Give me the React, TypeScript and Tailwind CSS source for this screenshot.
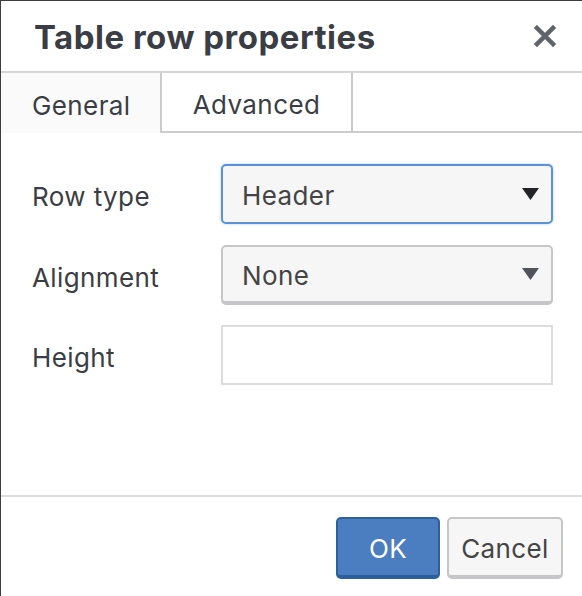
import { useState } from "react";

type Tab = "general" | "advanced";

const font = { fontFamily: "Inter, 'Noto Sans', sans-serif" };

function Caret({ dark }: { dark?: boolean }) {
  return (
    <svg width="17" height="12" viewBox="0 0 17 12" className="shrink-0">
      <path d="M0 0 H17 L8.5 12 Z" fill={dark ? "#222428" : "#4f545a"} />
    </svg>
  );
}

export default function App() {
  const [tab, setTab] = useState<Tab>("general");

  return (
    <div
      className="w-[582px] h-[596px] bg-white border-t border-l border-[#3d3d3d] flex flex-col text-[#3a3e44] overflow-hidden"
      style={font}
    >
      {/* Header */}
      <div className="h-[72px] shrink-0 flex items-center justify-between pl-[33px] pr-[21px] border-b-2 border-[#d5d5d5]">
        <h1 className="text-[33px] font-bold tracking-[0.5px] leading-none pt-[2px]">Table row properties</h1>
        <button className="text-[#5f636a] p-1">
          <svg width="24" height="24" viewBox="0 0 24 24">
            <path d="M4 4 L20 20 M20 4 L4 20" stroke="currentColor" strokeWidth="4.5" strokeLinecap="square" />
          </svg>
        </button>
      </div>

      {/* Tabs */}
      <div className="h-[60px] shrink-0 flex">
        <button
          onClick={() => setTab("general")}
          className={`w-[161px] pl-[31px] pt-[4px] text-left text-[26px] tracking-[0.4px] border-r-2 border-[#cccccc] ${
            tab === "general" ? "bg-[#fafafa] border-b-0" : "border-b-2"
          }`}
        >
          General
        </button>
        <button
          onClick={() => setTab("advanced")}
          className={`w-[191px] pt-[4px] text-center text-[26px] tracking-[0.4px] border-r-2 border-[#cccccc] ${
            tab === "advanced" ? "bg-[#fafafa]" : "border-b-2"
          }`}
        >
          Advanced
        </button>
        <div className="flex-1 border-b-2 border-[#cccccc]" />
      </div>

      {/* Body */}
      <div className="flex-1 pt-[31px] pl-[31px] pr-[29px] flex flex-col gap-[21px] text-[26px] tracking-[0.4px]">
        <div className="flex items-center">
          <label className="w-[189px] shrink-0 pt-[4px]">Row type</label>
          <div className="flex-1 h-[60px] rounded-[5px] border-2 border-[#5b92d6] shadow-[0_0_3px_rgba(32,122,183,0.35)] bg-[#f5f6f5] flex items-center justify-between pl-[19px] pr-[12px]">
            <span className="text-[#444444] pt-[3px]">Header</span>
            <Caret dark />
          </div>
        </div>
        <div className="flex items-center">
          <label className="w-[189px] shrink-0 pt-[4px]">Alignment</label>
          <div className="flex-1 h-[60px] rounded-[5px] border-2 border-b-[4px] border-[#c6c6c8] bg-[#f5f6f5] flex items-center justify-between pl-[19px] pr-[12px]">
            <span className="text-[#444444] pt-[3px]">None</span>
            <Caret />
          </div>
        </div>
        <div className="flex items-center -mt-[1px]">
          <label className="w-[189px] shrink-0 pt-[4px]">Height</label>
          <input className="flex-1 min-w-0 h-[60px] border-2 border-[#dcdcdc] bg-white outline-none px-4" />
        </div>
      </div>

      {/* Footer */}
      <div className="h-[101px] shrink-0 border-t-2 border-[#dddddd] flex justify-end items-start pt-[20px] pr-[19px] gap-[7px] text-[26px] tracking-[0.4px]">
        <button className="w-[104px] h-[62px] pt-[3px] rounded-[5px] bg-[#4a7ec0] border-2 border-b-[4px] border-[#2d5f9c] text-white">
          OK
        </button>
        <button className="w-[116px] h-[62px] pt-[3px] rounded-[5px] bg-[#f5f6f5] border-2 border-b-[4px] border-[#c6c6c8] text-[#444444]">
          Cancel
        </button>
      </div>
    </div>
  );
}
